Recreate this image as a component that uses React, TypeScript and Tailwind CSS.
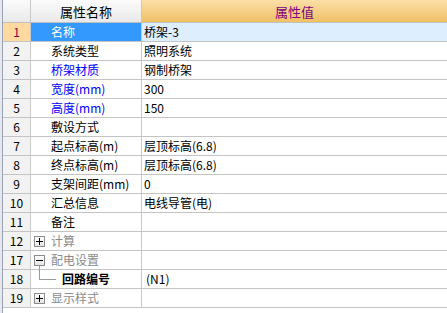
import React from "react";

type Row = {
  n: string;
  name: string;
  value?: string;
  kind?: "blue" | "group-plus" | "group-minus" | "child" | "sel";
};

const rows: Row[] = [
  { n: "1", name: "名称", value: "桥架-3", kind: "sel" },
  { n: "2", name: "系统类型", value: "照明系统" },
  { n: "3", name: "桥架材质", value: "钢制桥架", kind: "blue" },
  { n: "4", name: "宽度(mm)", value: "300", kind: "blue" },
  { n: "5", name: "高度(mm)", value: "150", kind: "blue" },
  { n: "6", name: "敷设方式", value: "" },
  { n: "7", name: "起点标高(m)", value: "层顶标高(6.8)" },
  { n: "8", name: "终点标高(m)", value: "层顶标高(6.8)" },
  { n: "9", name: "支架间距(mm)", value: "0" },
  { n: "10", name: "汇总信息", value: "电线导管(电)" },
  { n: "11", name: "备注", value: "" },
  { n: "12", name: "计算", kind: "group-plus" },
  { n: "17", name: "配电设置", kind: "group-minus" },
  { n: "18", name: "回路编号", value: "(N1)", kind: "child" },
  { n: "19", name: "显示样式", kind: "group-plus" },
];

const font = { fontFamily: '"Noto Sans CJK SC", "Liberation Sans", sans-serif' };

function Box({ plus }: { plus: boolean }) {
  return (
    <div className="relative w-[11px] h-[11px] border border-[#8c8c8c] bg-gradient-to-b from-white to-[#e4e4e4]">
      <div className="absolute left-[1px] right-[1px] top-[4px] h-[1px] bg-black" />
      {plus && <div className="absolute top-[1px] bottom-[1px] left-[4px] w-[1px] bg-black" />}
    </div>
  );
}

function NameCell({ r }: { r: Row }) {
  if (r.kind === "group-plus" || r.kind === "group-minus") {
    return (
      <div className="relative flex items-center h-full pl-[3px] gap-[6px]">
        <Box plus={r.kind === "group-plus"} />
        <span className="text-[#8a8a8a]">{r.name}</span>
        {r.kind === "group-minus" && (
          <div className="absolute left-[8px] top-[15px] w-[1px] h-[14px] bg-[#9a9a9a]" />
        )}
      </div>
    );
  }
  if (r.kind === "child") {
    return (
      <div className="relative flex items-center h-full pl-[31px]">
        <div className="absolute left-[8px] top-0 w-[1px] h-[10px] bg-[#9a9a9a]" />
        <div className="absolute left-[8px] top-[9px] w-[17px] h-[1px] bg-[#9a9a9a]" />
        <span className="text-black font-semibold">{r.name}</span>
      </div>
    );
  }
  const color =
    r.kind === "sel" ? "text-white" : r.kind === "blue" ? "text-[#0000ff]" : "text-black";
  return (
    <div className={`flex items-center h-full pl-[20px] ${color}`}>{r.name}</div>
  );
}

export default function App() {
  return (
    <div className="w-[447px] h-[313px] bg-white flex overflow-hidden text-[12px] leading-none" style={font}>
      <div className="w-[3px] h-full flex shrink-0">
        <div className="w-[2px] bg-[#e6e8ee]" />
        <div className="w-[1px] bg-[#9aa3b5]" />
      </div>
      <div className="flex-1 flex flex-col">
        <div className="flex h-[23px] border-b border-[#c0c0c0] shrink-0">
          <div className="w-[28px] border-r border-[#c8c8c8] bg-gradient-to-b from-[#fbfbfb] to-[#e9e9e9]" />
          <div className="w-[111px] border-r border-[#c8c8c8] bg-gradient-to-b from-[#fbfbfb] to-[#e9e9e9] flex items-center justify-center text-[13px] text-black">
            属性名称
          </div>
          <div className="flex-1 bg-gradient-to-b from-[#fadfa6] to-[#f0c164] flex items-center justify-center text-[13px] text-[#800080]">
            属性值
          </div>
        </div>
        {rows.map((r) => {
          const sel = r.kind === "sel";
          return (
            <div key={r.n} className="flex h-[19px] border-b border-[#c4c4c4] shrink-0">
              <div
                className={`w-[28px] border-r border-[#c8c8c8] flex items-center justify-center ${
                  sel ? "bg-[#ffd9a0] text-[#800040]" : "bg-[#f2f2f2] text-black"
                }`}
              >
                {r.n}
              </div>
              <div
                className={`w-[111px] border-r border-[#c8c8c8] ${sel ? "bg-[#3399ff]" : "bg-white"}`}
              >
                <NameCell r={r} />
              </div>
              <div
                className={`flex-1 flex items-center text-black ${
                  r.kind === "child" ? "pl-[4px]" : "pl-[2px]"
                } ${sel ? "bg-[#ddeeff]" : "bg-white"}`}
              >
                {r.value}
              </div>
            </div>
          );
        })}
      </div>
    </div>
  );
}
